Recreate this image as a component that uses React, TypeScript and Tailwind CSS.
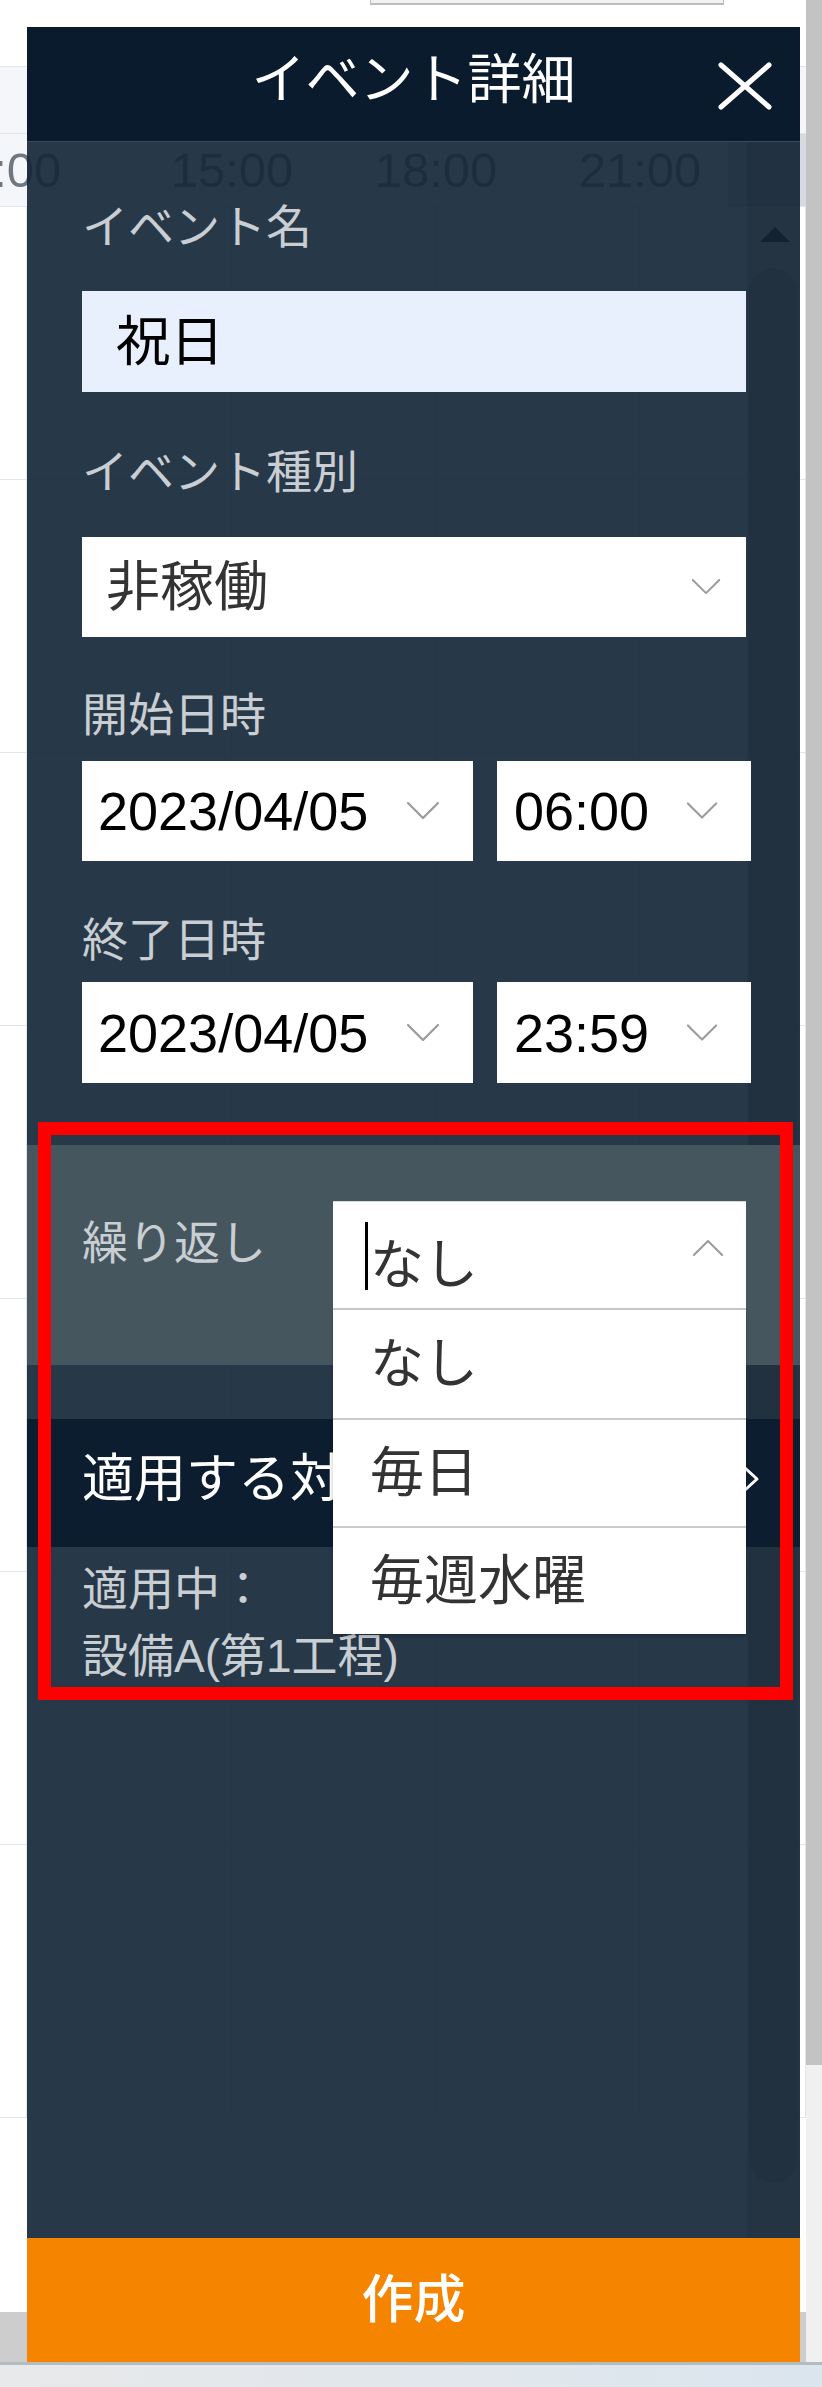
import React from "react";

const timeLabels = ["12:00", "15:00", "18:00", "21:00"];
const repeatOptions = ["なし", "毎日", "毎週水曜"];

function Chevron({ up = false, className = "" }: { up?: boolean; className?: string }) {
  return (
    <svg
      viewBox="0 0 34 20"
      className={className}
      fill="none"
      stroke="#9b9b9b"
      strokeWidth="2.2"
      strokeLinecap="round"
      strokeLinejoin="round"
    >
      <polyline points={up ? "2,18 17,3 32,18" : "2,2 17,17 32,2"} />
    </svg>
  );
}

function FieldLabel({ children }: { children: React.ReactNode }) {
  return <div className="h-[48px] text-[46px] leading-[48px] text-[#c9ced3]">{children}</div>;
}

function DateTimeRow({ date, time, className = "" }: { date: string; time: string; className?: string }) {
  return (
    <div className={`flex w-[669px] gap-[24px] ${className}`}>
      <div className="flex w-[391px] items-center justify-between bg-white pl-[16px] pr-[33px] text-[54px] leading-none text-black">
        <span>{date}</span>
        <Chevron className="h-[20px] w-[34px]" />
      </div>
      <div className="flex flex-1 items-center justify-between bg-white pl-[17px] pr-[33px] text-[54px] leading-none text-black">
        <span>{time}</span>
        <Chevron className="h-[20px] w-[32px]" />
      </div>
    </div>
  );
}

export default function App() {
  return (
    <div className="relative h-[2387px] w-[822px] overflow-hidden bg-white font-['Liberation_Sans','Noto_Sans_CJK_JP',sans-serif]">
      {/* calendar page underneath */}
      <div className="flex h-[2362px]">
        <div className="flex w-[806px] flex-col">
          <div className="h-[66px] shrink-0">
            <div className="ml-[370px] h-[5px] w-[354px] border-x border-b-2 border-[#bdbdbd] bg-[#f2f2f2]" />
          </div>
          <div className="h-[141px] shrink-0 border-t border-[#e0e5eb] bg-[#f4f6f9]">
            <div className="h-[67px] border-b border-[#e0e5eb]" />
            <div className="grid h-[73px] grid-cols-[27px_205px_204px_204px_88px_1fr] border-b border-[#e0e5eb]">
              <div />
              {timeLabels.map((t, i) => (
                <div key={t} className={`pt-[8px] ${i === 0 ? "-ml-[27px]" : ""}`}>
                  <span className="inline-block -translate-x-1/2 text-[49px] leading-[56px] text-[#6f7780]">
                    {t}
                  </span>
                </div>
              ))}
              <div className="bg-[#d6dbe1]" />
            </div>
          </div>
          <div className="grid shrink-0 grid-cols-[27px_205px_204px_204px_1fr]">
            {Array.from({ length: 35 }).map((_, i) => (
              <div key={i} className="h-[273px] border-b border-r border-[#e1e6ec]" />
            ))}
          </div>
          <div className="flex-1" />
          <div className="h-[50px] shrink-0 bg-[#cdcdcd]" />
        </div>
        <div className="flex w-[16px] flex-col">
          <div className="h-[2065px] bg-[#c3c3c3]" />
          <div className="flex-1 bg-[#f0f0f0]" />
        </div>
      </div>
      <div className="h-[25px] border-t-[3px] border-[#b4bbc1] bg-gradient-to-r from-[#e8e9ea] to-[#dbe5ee]" />

      {/* event detail drawer */}
      <div className="absolute left-[27px] top-[27px] flex h-[2335px] w-[773px] flex-col">
        <header className="grid h-[115px] shrink-0 grid-cols-[1fr_auto_1fr] border-b border-[#3a4a5c] bg-[#0b1b2e]">
          <div />
          <h1 className="pt-[27px] text-[54px] leading-[52px] text-white">イベント詳細</h1>
          <div className="flex justify-end pr-[27px] pt-[34px]">
            <svg viewBox="0 0 56 50" className="h-[50px] w-[56px]" stroke="white" strokeWidth="5" strokeLinecap="round">
              <line x1="4" y1="4" x2="52" y2="46" />
              <line x1="52" y1="4" x2="4" y2="46" />
            </svg>
          </div>
        </header>

        <div className="relative flex-1 bg-[rgba(21,39,57,0.92)]">
          {/* scrollbar */}
          <div className="absolute bottom-0 right-0 top-0 w-[53px] bg-black/[0.07]">
            <div className="ml-[13px] mt-[85px] h-0 w-0 border-b-[15px] border-l-[15px] border-r-[15px] border-b-[#14212e] border-l-transparent border-r-transparent" />
            <div className="absolute bottom-[55px] left-[2px] right-[3px] top-[126px] rounded-full bg-black/[0.04]" />
          </div>

          <div className="relative flex flex-col">
            <div className="flex flex-col px-[55px]">
              <div className="mt-[61px]">
                <FieldLabel>イベント名</FieldLabel>
              </div>
              <div className="mt-[40px] flex h-[101px] w-[664px] items-center bg-[#e8f0fe] pl-[34px] text-[54px] leading-none text-black">
                祝日
              </div>
              <div className="mt-[56px]">
                <FieldLabel>イベント種別</FieldLabel>
              </div>
              <div className="mt-[41px] flex h-[100px] w-[664px] items-center justify-between bg-white pl-[24px] pr-[25px] text-[54px] leading-none text-[#333333]">
                <span>非稼働</span>
                <Chevron className="h-[20px] w-[30px]" />
              </div>
              <div className="mt-[54px]">
                <FieldLabel>開始日時</FieldLabel>
              </div>
              <DateTimeRow date="2023/04/05" time="06:00" className="mt-[22px] h-[100px]" />
              <div className="mt-[55px]">
                <FieldLabel>終了日時</FieldLabel>
              </div>
              <DateTimeRow date="2023/04/05" time="23:59" className="mt-[18px] h-[101px]" />
            </div>

            {/* repeat */}
            <div className="mt-[62px] flex h-[220px] justify-between bg-[#46565f] pl-[55px] pr-[54px]">
              <div className="mt-[74px]">
                <FieldLabel>繰り返し</FieldLabel>
              </div>
              <div className="relative mt-[56px] h-[109px] w-[413px]">
                <div className="flex h-full items-center border-b-2 border-t border-b-[#cacaca] border-t-[#d6d6d6] bg-white pr-[22px] pt-[20px]">
                  <div className="ml-[32px] h-[68px] w-[3px] -translate-y-[9px] bg-black" />
                  <span className="ml-[2px] text-[54px] leading-none text-[#333333]">なし</span>
                  <Chevron up className="-mt-[36px] ml-auto h-[19px] w-[32px]" />
                </div>
                <ul className="absolute left-0 right-0 top-full z-20 bg-white shadow-[0_2px_4px_rgba(0,0,0,0.25)]">
                  {repeatOptions.map((o, i) => (
                    <li
                      key={o}
                      className={`flex h-[108px] items-center pl-[37px] text-[54px] leading-none text-[#333333] ${
                        i > 0 ? "border-t-2 border-[#cacaca]" : ""
                      }`}
                    >
                      {o}
                    </li>
                  ))}
                </ul>
              </div>
            </div>

            {/* apply targets */}
            <div className="mt-[54px] flex h-[128px] items-center justify-between bg-[#0d1d30] pb-[8px] pl-[55px] pr-[40px]">
              <span className="text-[52px] leading-none text-white">適用する対象</span>
              <svg viewBox="0 0 18 28" className="h-[28px] w-[18px]" fill="none" stroke="white" strokeWidth="3" strokeLinecap="round" strokeLinejoin="round">
                <polyline points="3,3 15,14 3,25" />
              </svg>
            </div>
            <div className="mt-[18px] pl-[55px]">
              <FieldLabel>適用中：</FieldLabel>
            </div>
            <div className="mt-[19px] pl-[55px]">
              <FieldLabel>設備A(第1工程)</FieldLabel>
            </div>
          </div>
        </div>

        <button className="flex h-[124px] shrink-0 items-center justify-center bg-[#f58400] text-[52px] font-medium leading-none text-white">
          作成
        </button>
      </div>

      {/* annotation */}
      <div className="absolute left-[38px] top-[1122px] z-30 h-[578px] w-[755px] border-[13px] border-[#ff0000]" />
    </div>
  );
}
